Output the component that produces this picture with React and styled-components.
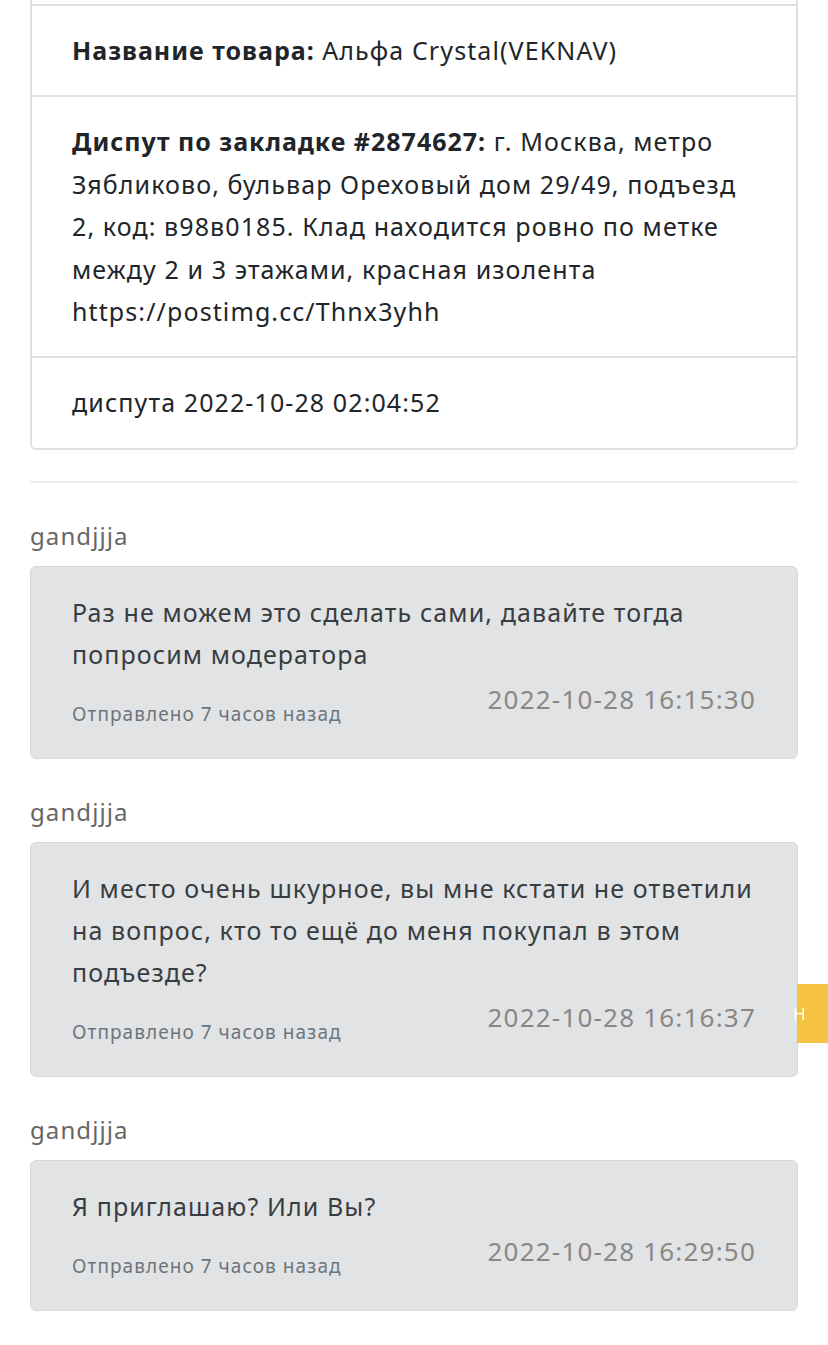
import React from 'react'
import styled, { createGlobalStyle } from 'styled-components'

const COLOR = {
  TEXT: '#212529',
  BORDER: '#dfdfdf',
  NAME: '#666666',
  MSG_BG: '#e2e3e5',
  MSG_BORDER: '#d6d8db',
  MSG_TEXT: '#383d41',
  MUTED: '#6c757d',
  DATE: '#888888',
  YELLOW: '#f5c242',
}

const GlobalStyle = createGlobalStyle`
  body {
    margin: 0;
    background: #fff;
    font-family: "Noto Sans", "Open Sans", sans-serif;
    color: ${COLOR.TEXT};
    overflow: hidden;
  }
`

const Page = styled.div`
  padding: 0 30px 40px 30px;
`

const Card = styled.div`
  margin-top: -40px;
  display: flex;
  flex-direction: column;
`

const Item = styled.div`
  border: 2px solid ${COLOR.BORDER};
  margin-top: -2px;
  padding: ${props => (props.empty ? '0' : '23px 40px 24px 40px')};
  height: ${props => (props.empty ? '42px' : 'auto')};
  font-size: 25px;
  letter-spacing: 1.1px;
  line-height: 42.4px;
  color: ${COLOR.TEXT};
  &:first-child {
    margin-top: 0;
  }
  &:last-child {
    border-radius: 0 0 6px 6px;
  }
`

const Bold = styled.b`
  font-weight: 700;
  letter-spacing: 1px;
`

const Divider = styled.hr`
  border: 0;
  border-top: 2px solid #eceef0;
  margin: 31px 0 32px 0;
`

const Author = styled.div`
  font-size: 24px;
  letter-spacing: 1.1px;
  line-height: 42px;
  color: ${COLOR.NAME};
  margin-bottom: 9px;
`

const Message = styled.div`
  background: ${COLOR.MSG_BG};
  border: 1px solid ${COLOR.MSG_BORDER};
  border-radius: 6px;
  padding: 24px 41px 26px 41px;
  margin-bottom: 32px;
`

const MessageText = styled.div`
  font-size: 25px;
  letter-spacing: 1.1px;
  line-height: 42px;
  color: ${COLOR.MSG_TEXT};
`

const Footer = styled.div`
  display: flex;
  justify-content: space-between;
  align-items: flex-start;
  padding-top: 3px;
`

const Sent = styled.small`
  font-size: 19px;
  letter-spacing: 1.05px;
  line-height: 36px;
  margin-top: 18px;
  color: ${COLOR.MUTED};
`

const Date = styled.span`
  font-size: 26px;
  letter-spacing: 1.2px;
  line-height: 42px;
  color: ${COLOR.DATE};
`

const SideTab = styled.div`
  position: fixed;
  right: 0;
  top: 984px;
  width: 31px;
  height: 59px;
  background: ${COLOR.YELLOW};
  z-index: 1;
`

const SideTabLabel = styled.span`
  position: absolute;
  left: -4px;
  top: 0;
  color: #fff;
  font-size: 17px;
  line-height: 59px;
`

const messages = [
  {
    author: 'gandjjja',
    text: 'Раз не можем это сделать сами, давайте тогда попросим модератора',
    date: '2022-10-28 16:15:30',
  },
  {
    author: 'gandjjja',
    text: 'И место очень шкурное, вы мне кстати не ответили на вопрос, кто то ещё до меня покупал в этом подъезде?',
    date: '2022-10-28 16:16:37',
  },
  {
    author: 'gandjjja',
    text: 'Я приглашаю? Или Вы?',
    date: '2022-10-28 16:29:50',
  },
]

export default function App() {
  return (
    <Page>
      <GlobalStyle />
      <Card>
        <Item empty />
        <Item>
          <Bold>Название товара:</Bold> Альфа Crystal(VEKNAV)
        </Item>
        <Item>
          <Bold>Диспут по закладке #2874627:</Bold> г. Москва, метро Зябликово, бульвар Ореховый дом 29/49,
          подъезд 2, код: в98в0185. Клад находится ровно по метке между 2 и 3 этажами, красная изолента
          https://postimg.cc/Thnx3yhh
        </Item>
        <Item>диспута 2022-10-28 02:04:52</Item>
      </Card>
      <Divider />
      {messages.map((msg, index) => (
        <div key={index}>
          <Author>{msg.author}</Author>
          <Message>
            <MessageText>{msg.text}</MessageText>
            <Footer>
              <Sent>Отправлено 7 часов назад</Sent>
              <Date>{msg.date}</Date>
            </Footer>
          </Message>
        </div>
      ))}
      <SideTab>
        <SideTabLabel>Н</SideTabLabel>
      </SideTab>
    </Page>
  )
}
